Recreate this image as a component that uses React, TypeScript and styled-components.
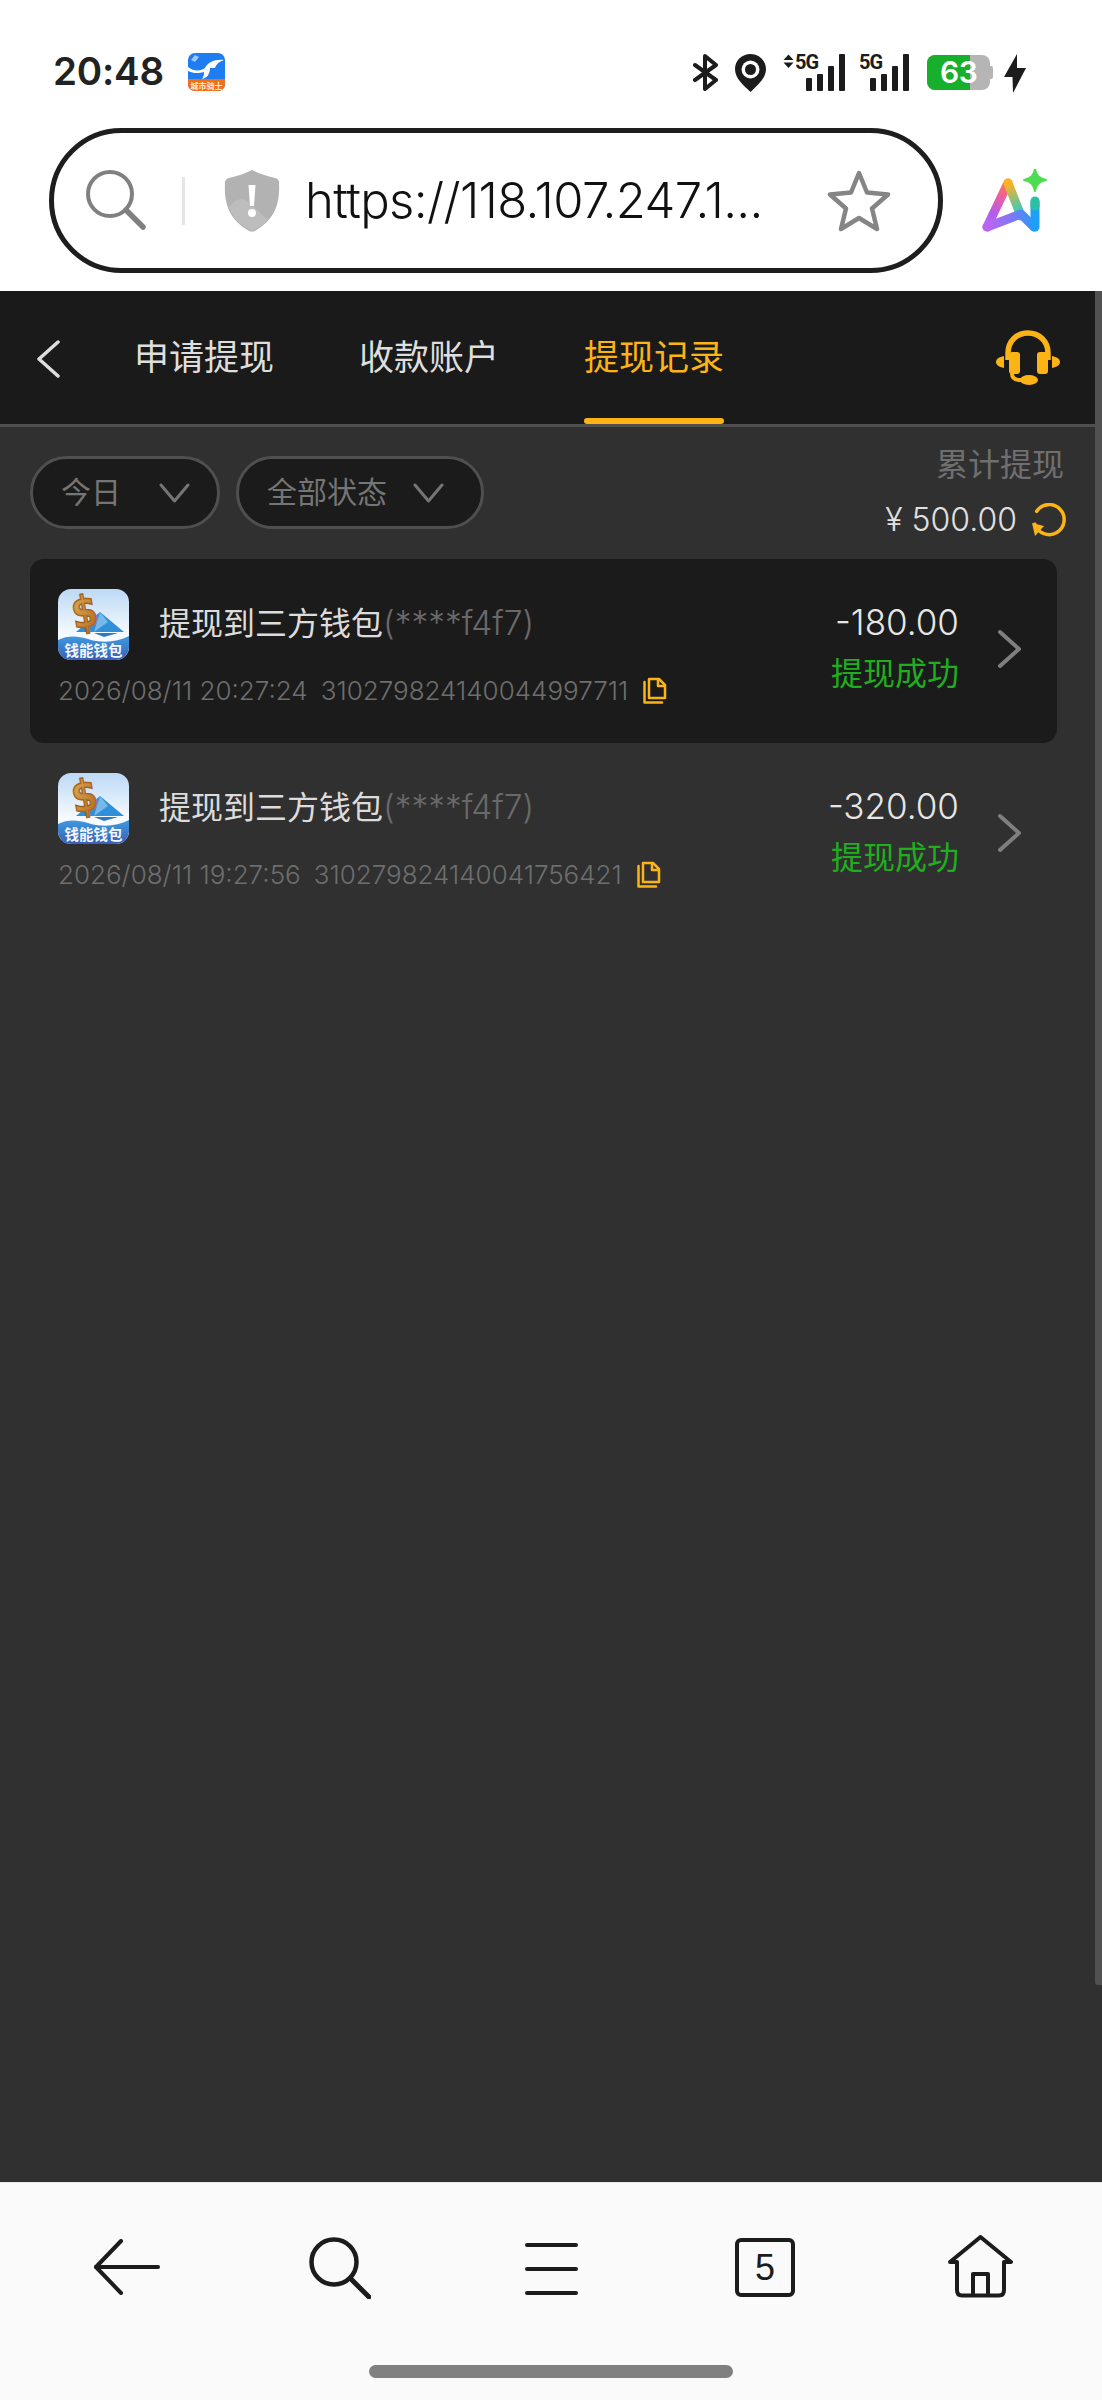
import React from "react";
import styled, { createGlobalStyle } from "styled-components";

const GlobalStyle = createGlobalStyle`
    html, body {
        margin: 0;
        padding: 0;
        background: #ffffff;
    }
    * {
        box-sizing: border-box;
    }
`;

const FONT = `Inter, "Noto Sans CJK SC", "Noto Sans", sans-serif`;

const Page = styled.div`
    width: 1102px;
    height: 2400px;
    display: flex;
    flex-direction: column;
    overflow: hidden;
    font-family: ${FONT};
    background: #ffffff;
`;

const StatusBar = styled.div`
    height: 115px;
    flex: none;
    padding: 53px 76px 0 53px;
    display: flex;
    align-items: flex-start;
    justify-content: space-between;
`;
const StatusLeft = styled.div`
    display: flex;
    align-items: center;
    gap: 24px;
    height: 37px;
`;
const Time = styled.div`
    font-size: 38.5px;
    font-weight: 600;
    color: #222222;
    letter-spacing: -0.2px;
    line-height: 37px;
`;
const StatusRight = styled.div`
    display: flex;
    align-items: flex-start;
    height: 38px;
    padding-top: 1px;
`;
const SignalWrap = styled.div<{ $w: number; $ml: number }>`
    position: relative;
    width: ${(p) => p.$w}px;
    margin-left: ${(p) => p.$ml}px;
    height: 37px;
    flex: none;
`;
const NetLabel = styled.div<{ $left: number }>`
    position: absolute;
    left: ${(p) => p.$left}px;
    top: 0;
    font-family: Roboto, sans-serif;
    font-size: 20px;
    font-weight: 700;
    line-height: 16px;
    letter-spacing: -1px;
    color: #1c1c1c;
`;
const Battery = styled.div`
    position: relative;
    width: 63px;
    height: 35px;
    margin-left: 18px;
    margin-top: 1px;
    border-radius: 8px;
    background: #b5b5b5;
    flex: none;
`;
const BatteryFill = styled.div`
    width: 43px;
    height: 100%;
    border-radius: 8px 0 0 8px;
    background: #16b02c;
`;
const BatteryText = styled.div`
    position: absolute;
    left: 13px;
    top: 0;
    line-height: 35px;
    font-size: 30px;
    font-weight: 600;
    color: #ffffff;
    letter-spacing: -0.5px;
`;
const BatteryNub = styled.div`
    width: 3px;
    height: 13px;
    margin-top: 12px;
    border-radius: 0 2px 2px 0;
    background: #b5b5b5;
    flex: none;
`;
const BoltWrap = styled.div`
    margin-left: 11px;
    display: flex;
`;

const BrowserRow = styled.div`
    height: 176px;
    flex: none;
    padding: 13px 54px 0 49px;
    display: flex;
    align-items: flex-start;
    justify-content: space-between;
`;
const AddressBar = styled.div`
    width: 894px;
    height: 145px;
    border: 5px solid #1e1e1e;
    border-radius: 73px;
    display: flex;
    align-items: center;
    padding-left: 32px;
`;
const Divider = styled.div`
    width: 3px;
    height: 48px;
    margin-left: 35px;
    background: #e6e6e6;
    flex: none;
`;
const ShieldWrap = styled.div`
    margin-left: 39px;
    display: flex;
    flex: none;
`;
const Url = styled.div`
    width: 473px;
    margin-left: 25px;
    font-size: 49px;
    font-weight: 300;
    color: #111111;
    letter-spacing: -0.6px;
    white-space: nowrap;
    flex: none;
`;
const StarWrap = styled.div`
    margin-left: 49px;
    display: flex;
    flex: none;
`;
const AiWrap = styled.div`
    margin-top: 41px;
    display: flex;
`;

const Main = styled.div`
    position: relative;
    flex: 1;
    background: #303030;
`;
const ScrollThumb = styled.div`
    position: absolute;
    right: 0;
    top: 0;
    width: 7px;
    height: 1694px;
    background: #515151;
    border-bottom-left-radius: 3px;
`;
const TabBar = styled.div`
    height: 136px;
    background: #1a1a1a;
    border-bottom: 3px solid #4f4f4f;
    display: flex;
    align-items: stretch;
    padding-left: 36px;
    padding-right: 42px;
`;
const BackButton = styled.div`
    width: 98px;
    padding-top: 49px;
    flex: none;
`;
const Tab = styled.div<{ $active?: boolean }>`
    position: relative;
    width: 140px;
    margin-right: 85px;
    padding-top: 42px;
    font-size: 35px;
    line-height: 48px;
    white-space: nowrap;
    color: ${(p) => (p.$active ? "#fbb316" : "#dedede")};
    flex: none;
    ${(p) =>
        p.$active &&
        `
        &::after {
            content: "";
            position: absolute;
            left: 0;
            right: 0;
            bottom: 0;
            height: 6px;
            border-radius: 3px;
            background: #fbb316;
        }
    `}
`;
const HeadsetWrap = styled.div`
    margin-left: auto;
    padding-top: 39px;
`;

const FilterRow = styled.div`
    height: 132px;
    padding: 29px 36px 0 30px;
    display: flex;
    justify-content: space-between;
    align-items: flex-start;
`;
const Filters = styled.div`
    display: flex;
    gap: 16px;
`;
const FilterPill = styled.div<{ $w: number; $pr: number }>`
    width: ${(p) => p.$w}px;
    height: 73px;
    background: #1b1b1b;
    border: 3px solid #4f4f4f;
    border-radius: 37px;
    display: flex;
    align-items: center;
    justify-content: space-between;
    padding: 0 ${(p) => p.$pr}px 0 28px;
    font-size: 30px;
    color: #757575;
`;
const FilterLabel = styled.span`
    margin-top: -5px;
`;
const TotalBox = styled.div`
    display: flex;
    flex-direction: column;
    align-items: flex-end;
    margin-top: -13px;
`;
const TotalLabel = styled.div`
    font-size: 32px;
    line-height: 44px;
    color: #6f6f6f;
    margin-right: 2px;
`;
const TotalValue = styled.div`
    display: flex;
    align-items: center;
    gap: 14px;
    margin-top: 11px;
    font-size: 32px;
    line-height: 44px;
    font-weight: 300;
    color: #e0e0e0;
    white-space: nowrap;
`;

const List = styled.div`
    padding: 0 45px 0 30px;
    display: flex;
    flex-direction: column;
`;
const Record = styled.div<{ $selected?: boolean }>`
    height: 184px;
    border-radius: 14px;
    background: ${(p) => (p.$selected ? "#1b1b1b" : "transparent")};
    padding: 30px 35px 0 28px;
    display: flex;
    justify-content: space-between;
`;
const RecordLeft = styled.div`
    display: flex;
    flex-direction: column;
`;
const TitleRow = styled.div`
    display: flex;
    align-items: center;
    gap: 30px;
    height: 70px;
`;
const RecordTitle = styled.div`
    font-size: 32px;
    line-height: 44px;
    margin-top: -2px;
    color: #dcdcdc;
    white-space: nowrap;
`;
const Masked = styled.span`
    font-size: 33.5px;
    font-weight: 300;
    color: #696969;
`;
const MetaRow = styled.div`
    display: flex;
    align-items: center;
    margin-top: 13px;
    height: 36px;
    font-size: 26px;
    font-weight: 300;
    color: #6e6e6e;
    white-space: nowrap;
`;
const RecordNo = styled.span`
    margin-left: 13px;
`;
const CopyWrap = styled.span`
    display: flex;
    margin-left: 15px;
`;
const RecordRight = styled.div`
    display: flex;
    align-items: flex-start;
`;
const Amounts = styled.div`
    display: flex;
    flex-direction: column;
    align-items: flex-end;
    margin-top: 8px;
`;
const Amount = styled.div`
    font-size: 35px;
    line-height: 50px;
    font-weight: 300;
    color: #e6e6e6;
`;
const Status = styled.div`
    font-size: 32px;
    line-height: 44px;
    margin-top: 5px;
    color: #1fae1f;
`;
const ArrowWrap = styled.div`
    margin-left: 38px;
    margin-top: 40px;
    display: flex;
`;

const BottomNav = styled.div`
    position: relative;
    height: 218px;
    flex: none;
    background: #fafafa;
    border-top: 1px solid #e8e8e8;
    padding-left: 94px;
    display: flex;
    align-items: flex-start;
`;
const NavItem = styled.div<{ $ml: number; $mt: number }>`
    margin-left: ${(p) => p.$ml}px;
    margin-top: ${(p) => p.$mt}px;
    display: flex;
    flex: none;
`;
const NavTabs = styled.div`
    width: 60px;
    height: 59px;
    border: 4px solid #1c1c1c;
    border-radius: 6px;
    display: flex;
    align-items: center;
    justify-content: center;
    font-family: "Liberation Sans", sans-serif;
    font-size: 36px;
    color: #1c1c1c;
`;
const HomeIndicator = styled.div`
    position: absolute;
    left: 369px;
    bottom: 22px;
    width: 364px;
    height: 13px;
    border-radius: 7px;
    background: #808080;
`;

const SearchIcon = () => (
    <svg width="61" height="61" viewBox="0 0 61 61" fill="none">
        <circle cx="24" cy="24" r="22" stroke="#808080" strokeWidth="4" />
        <path d="M40 40L57 57" stroke="#808080" strokeWidth="5.5" strokeLinecap="round" />
    </svg>
);

const ShieldIcon = () => (
    <svg width="56" height="63" viewBox="0 0 56 63">
        <path d="M28 1C34 4 42 7 51 9C54 10 55 11 55 14C56 33 52 50 31 62C29 63 27 63 25 62C4 50 0 33 1 14C1 11 2 10 5 9C14 7 22 4 28 1Z" fill="#b2b2b2" />
        <path d="M28 62C14 55 8 47 5 38C14 26 22 30 28 36C36 44 42 50 44 50C40 55 35 59 28 62Z" fill="#bdbdbd" />
        <path d="M24.5 16H31.500L30 37H26Z" fill="#ffffff" />
        <circle cx="28" cy="44" r="4" fill="#ffffff" />
    </svg>
);

const StarIcon = () => (
    <svg width="64" height="62" viewBox="0 0 64 62" fill="none">
        <path
            d="M32 3L40 22.500L61 24.500L45 38.500L50 59L32 48L14 59L19 38.500L3 24.500L24 22.500Z"
            stroke="#858585"
            strokeWidth="4.500"
            strokeLinejoin="round"
        />
    </svg>
);

const AiLogo = () => (
    <svg width="66" height="64" viewBox="0 0 66 64" fill="none">
        <defs>
            <linearGradient id="aiA" x1="30" y1="8" x2="4" y2="62" gradientUnits="userSpaceOnUse">
                <stop offset="0" stopColor="#ff8a1f" />
                <stop offset="0.35" stopColor="#f0609a" />
                <stop offset="0.7" stopColor="#b05cf0" />
                <stop offset="1" stopColor="#c26bf5" />
            </linearGradient>
            <linearGradient id="aiB" x1="4" y1="58" x2="55" y2="50" gradientUnits="userSpaceOnUse">
                <stop offset="0" stopColor="#bf63f3" />
                <stop offset="0.55" stopColor="#7b78f5" />
                <stop offset="1" stopColor="#1ea0f8" />
            </linearGradient>
            <linearGradient id="aiC" x1="27" y1="14" x2="38" y2="40" gradientUnits="userSpaceOnUse">
                <stop offset="0" stopColor="#ffb21f" />
                <stop offset="1" stopColor="#46c9b4" />
            </linearGradient>
        </defs>
        <path d="M5 58L26 14" stroke="url(#aiA)" strokeWidth="9" strokeLinecap="round" />
        <path d="M26 14L39 47" stroke="url(#aiC)" strokeWidth="9" strokeLinecap="round" />
        <path d="M5 58L39 45L52 58" stroke="url(#aiB)" strokeWidth="9" strokeLinecap="round" strokeLinejoin="round" />
        <path d="M53 33V58" stroke="#1e9ff8" strokeWidth="9" strokeLinecap="round" />
        <path d="M53 32V37" stroke="#2bbfa6" strokeWidth="9" strokeLinecap="round" />
        <path d="M53 0C54.500 7 57 9.500 64 11C57 12.500 54.500 15 53 22C51.500 15 49 12.500 42 11C49 9.500 51.500 7 53 0Z" fill="#4fdc55" stroke="#4fdc55" strokeWidth="2" strokeLinejoin="round" />
    </svg>
);

const TaskAppIcon = () => (
    <svg width="37" height="38" viewBox="0 0 37 38">
        <rect width="37" height="38" rx="7" fill="#1f7df2" />
        <path d="M0 26H37V31C37 35 34 38 30 38H7C3 38 0 35 0 31Z" fill="#f0701c" />
        <path d="M0 14C6 19 13 18 17 15C20 9 27 6 36 7C30 9 28 12 27 15H22C22 21 19 25 14 26C16 23 16 21 16 19C10 21 4 20 0 18Z" fill="#ffffff" />
        <path d="M3 7L7 2L11 4L7 9Z" fill="#9cc8fa" />
        <text x="18.500" y="35.500" fontSize="8" fontWeight="700" textAnchor="middle" fill="#ffe7d4" fontFamily="Noto Sans CJK SC, sans-serif">
            城市骑士
        </text>
    </svg>
);

const SignalBars = ({ arrows }: { arrows?: boolean }) => (
    <svg width={arrows ? 62 : 48} height="37" viewBox={`0 0 ${arrows ? 62 : 48} 37`}>
        {arrows && <path d="M5.500 0.500L10.500 6H0.500ZM5.500 14L0.500 8.500H10.500Z" fill="#1c1c1c" />}
        <g transform={arrows ? "translate(14 0)" : undefined}>
            <rect x="9" y="24" width="6" height="13" rx="1" fill="#1c1c1c" />
            <rect x="20" y="20" width="6" height="17" rx="1" fill="#1c1c1c" />
            <rect x="31" y="12" width="6" height="25" rx="1" fill="#1c1c1c" />
            <rect x="42" y="0" width="6" height="37" rx="1" fill="#1c1c1c" />
        </g>
    </svg>
);

const WalletIcon = () => (
    <svg width="71" height="71" viewBox="0 0 71 71">
        <defs>
            <linearGradient id="walletBg" x1="0" y1="0" x2="0" y2="1">
                <stop offset="0" stopColor="#bcd9f5" />
                <stop offset="0.65" stopColor="#f7fbff" />
                <stop offset="1" stopColor="#ffffff" />
            </linearGradient>
            <linearGradient id="walletWave" x1="0" y1="0" x2="0" y2="1">
                <stop offset="0" stopColor="#3e9be0" />
                <stop offset="1" stopColor="#3a5fb6" />
            </linearGradient>
            <linearGradient id="walletGold" x1="0" y1="0" x2="1" y2="1">
                <stop offset="0" stopColor="#e7b35e" />
                <stop offset="1" stopColor="#a9641a" />
            </linearGradient>
            <clipPath id="walletClip">
                <rect width="71" height="71" rx="13" />
            </clipPath>
        </defs>
        <g clipPath="url(#walletClip)">
            <rect width="71" height="71" fill="url(#walletBg)" />
            <path d="M42 23L66 43H18Z" fill="#2f8fd8" />
            <path d="M42 23L50 33L36 43Z" fill="#76b8e8" />
            <path d="M36 44H60L46 48Z" fill="#2c79c4" />
            <text fontSize="44" fontWeight="800" textAnchor="middle" fill="url(#walletGold)" stroke="#a9641a" strokeWidth="1.500" fontFamily="DejaVu Sans, sans-serif" transform="translate(29 38) rotate(-10) scale(0.85 1)">
                $
            </text>
            <path d="M0 51C10 46 20 47 30 50C42 54 58 54 71 47V71H0Z" fill="url(#walletWave)" />
            <text x="35.500" y="67" fontSize="14.500" fontWeight="700" textAnchor="middle" fill="#f2f6fc" fontFamily="Noto Sans CJK SC, sans-serif">
                钱能钱包
            </text>
        </g>
    </svg>
);

const CopyIcon = () => (
    <svg width="24" height="27" viewBox="0 0 24 27" fill="none" stroke="#fbb316" strokeWidth="2.500" strokeLinejoin="round">
        <path d="M6 2H16L22 8V21H6Z" />
        <path d="M15 2V9H22" />
        <path d="M1.500 5V25.500H19" strokeLinecap="round" />
    </svg>
);

const FilterChevron = () => (
    <svg width="31" height="20" viewBox="0 0 31 20" fill="none">
        <path d="M2 2L15.500 18L29 2" stroke="#757575" strokeWidth="3" strokeLinecap="round" strokeLinejoin="round" />
    </svg>
);

const RefreshIcon = () => (
    <svg width="35" height="35" viewBox="0 0 35 35" fill="none">
        <path d="M5 24A15 15 0 1 0 4 11" stroke="#fbb316" strokeWidth="3.500" strokeLinecap="round" transform="rotate(12 17.500 17.500)" />
        <path d="M1 20L13 23L4 33Z" fill="#fbb316" />
    </svg>
);

const HeadsetIcon = () => (
    <svg width="64" height="56" viewBox="0 0 64 56" fill="none">
        <path d="M12 30V23C12 11 21 3 32 3C43 3 52 11 52 23V30" stroke="#fbb316" strokeWidth="5.500" />
        <rect x="13" y="22" width="11" height="22" rx="3" fill="#fbb316" />
        <rect x="41" y="22" width="11" height="22" rx="3" fill="#fbb316" />
        <path d="M8 26V38C3 37 0 35 0 32C0 29 3 27 8 26Z" fill="#fbb316" />
        <path d="M56 26V38C61 37 64 35 64 32C64 29 61 27 56 26Z" fill="#fbb316" />
        <path d="M16 44C16 48 19 50 25 50" stroke="#fbb316" strokeWidth="4" strokeLinecap="round" />
        <ellipse cx="33" cy="50" rx="9" ry="5" fill="#fbb316" />
    </svg>
);

const NavBack = () => (
    <svg width="66" height="56" viewBox="0 0 66 56" fill="none" stroke="#1c1c1c" strokeWidth="4" strokeLinecap="round" strokeLinejoin="round">
        <path d="M64 28H2" />
        <path d="M27 2L2 28L27 54" />
    </svg>
);

const NavSearch = () => (
    <svg width="62" height="62" viewBox="0 0 62 62" fill="none" stroke="#1c1c1c">
        <circle cx="25" cy="25" r="22.500" strokeWidth="4.500" />
        <path d="M42 42L60 60" strokeWidth="5" strokeLinecap="round" />
    </svg>
);

const NavMenu = () => (
    <svg width="53" height="54" viewBox="0 0 53 54" fill="none" stroke="#1c1c1c" strokeWidth="4" strokeLinecap="round">
        <path d="M2 3H51M2 27H51M2 51H51" />
    </svg>
);

const NavHome = () => (
    <svg width="65" height="63" viewBox="0 0 65 63" fill="none" stroke="#1c1c1c" strokeWidth="4" strokeLinejoin="round">
        <path d="M2 27L32.500 2L63 27H56V55C56 58.500 54.500 60.500 51 60.500H14C10.500 60.500 9 58.500 9 55V27Z" />
        <path d="M25 60V39H40V60" />
    </svg>
);

const records = [
    { time: "2026/08/11 20:27:24", no: "310279824140044997711", amount: "-180.00", selected: true },
    { time: "2026/08/11 19:27:56", no: "310279824140041756421", amount: "-320.00", selected: false },
];

const App = () => {
    return (
        <Page>
            <GlobalStyle />
            <StatusBar>
                <StatusLeft>
                    <Time>20:48</Time>
                    <TaskAppIcon />
                </StatusLeft>
                <StatusRight>
                    <svg width="26" height="37" viewBox="0 0 26 37" fill="none" stroke="#1c1c1c" strokeWidth="4" strokeLinejoin="round" strokeLinecap="round">
                        <path d="M2 11L23 26L12 35V2L23 11L2 26" />
                    </svg>
                    <SignalWrap $w={31} $ml={16}>
                        <svg width="31" height="38" viewBox="0 0 31 38">
                            <path d="M15.500 0C24 0 31 6.500 31 15C31 24 23 31 15.500 38C8 31 0 24 0 15C0 6.500 7 0 15.500 0Z" fill="#1c1c1c" />
                            <circle cx="15.500" cy="15.500" r="9" fill="#ffffff" />
                            <circle cx="15.500" cy="15.500" r="5.500" fill="#1c1c1c" />
                        </svg>
                    </SignalWrap>
                    <SignalWrap $w={62} $ml={17}>
                        <SignalBars arrows />
                        <NetLabel $left={12}>5G</NetLabel>
                    </SignalWrap>
                    <SignalWrap $w={48} $ml={16}>
                        <SignalBars />
                        <NetLabel $left={-2}>5G</NetLabel>
                    </SignalWrap>
                    <Battery>
                        <BatteryFill />
                        <BatteryText>63</BatteryText>
                    </Battery>
                    <BatteryNub />
                    <BoltWrap>
                        <svg width="22" height="39" viewBox="0 0 22 39">
                            <path d="M13 0L0 23H8.500L9 39L22 14H13Z" fill="#1c1c1c" />
                        </svg>
                    </BoltWrap>
                </StatusRight>
            </StatusBar>

            <BrowserRow>
                <AddressBar>
                    <SearchIcon />
                    <Divider />
                    <ShieldWrap>
                        <ShieldIcon />
                    </ShieldWrap>
                    <Url>https://118.107.247.1...</Url>
                    <StarWrap>
                        <StarIcon />
                    </StarWrap>
                </AddressBar>
                <AiWrap>
                    <AiLogo />
                </AiWrap>
            </BrowserRow>

            <Main>
                <TabBar>
                    <BackButton>
                        <svg width="24" height="38" viewBox="0 0 24 38" fill="none">
                            <path d="M22 2L3 19L22 36" stroke="#dedede" strokeWidth="3.500" strokeLinecap="round" strokeLinejoin="round" />
                        </svg>
                    </BackButton>
                    <Tab>申请提现</Tab>
                    <Tab>收款账户</Tab>
                    <Tab $active>提现记录</Tab>
                    <HeadsetWrap>
                        <HeadsetIcon />
                    </HeadsetWrap>
                </TabBar>

                <FilterRow>
                    <Filters>
                        <FilterPill $w={190} $pr={27}>
                            <FilterLabel>今日</FilterLabel>
                            <FilterChevron />
                        </FilterPill>
                        <FilterPill $w={248} $pr={37}>
                            <FilterLabel>全部状态</FilterLabel>
                            <FilterChevron />
                        </FilterPill>
                    </Filters>
                    <TotalBox>
                        <TotalLabel>累计提现</TotalLabel>
                        <TotalValue>
                            ¥ 500.00
                            <RefreshIcon />
                        </TotalValue>
                    </TotalBox>
                </FilterRow>

                <List>
                    {records.map((r) => (
                        <Record key={r.no} $selected={r.selected}>
                            <RecordLeft>
                                <TitleRow>
                                    <WalletIcon />
                                    <RecordTitle>
                                        提现到三方钱包<Masked>(****f4f7)</Masked>
                                    </RecordTitle>
                                </TitleRow>
                                <MetaRow>
                                    {r.time}
                                    <RecordNo>{r.no}</RecordNo>
                                    <CopyWrap>
                                        <CopyIcon />
                                    </CopyWrap>
                                </MetaRow>
                            </RecordLeft>
                            <RecordRight>
                                <Amounts>
                                    <Amount>{r.amount}</Amount>
                                    <Status>提现成功</Status>
                                </Amounts>
                                <ArrowWrap>
                                    <svg width="25" height="40" viewBox="0 0 25 40" fill="none">
                                        <path d="M3 3L22 20L3 37" stroke="#7f7f7f" strokeWidth="4" strokeLinecap="round" strokeLinejoin="round" />
                                    </svg>
                                </ArrowWrap>
                            </RecordRight>
                        </Record>
                    ))}
                </List>
                <ScrollThumb />
            </Main>

            <BottomNav>
                <NavItem $ml={0} $mt={56}>
                    <NavBack />
                </NavItem>
                <NavItem $ml={149} $mt={54}>
                    <NavSearch />
                </NavItem>
                <NavItem $ml={154} $mt={59}>
                    <NavMenu />
                </NavItem>
                <NavItem $ml={157} $mt={55}>
                    <NavTabs>5</NavTabs>
                </NavItem>
                <NavItem $ml={153} $mt={52}>
                    <NavHome />
                </NavItem>
                <HomeIndicator />
            </BottomNav>
        </Page>
    );
};

export default App;
